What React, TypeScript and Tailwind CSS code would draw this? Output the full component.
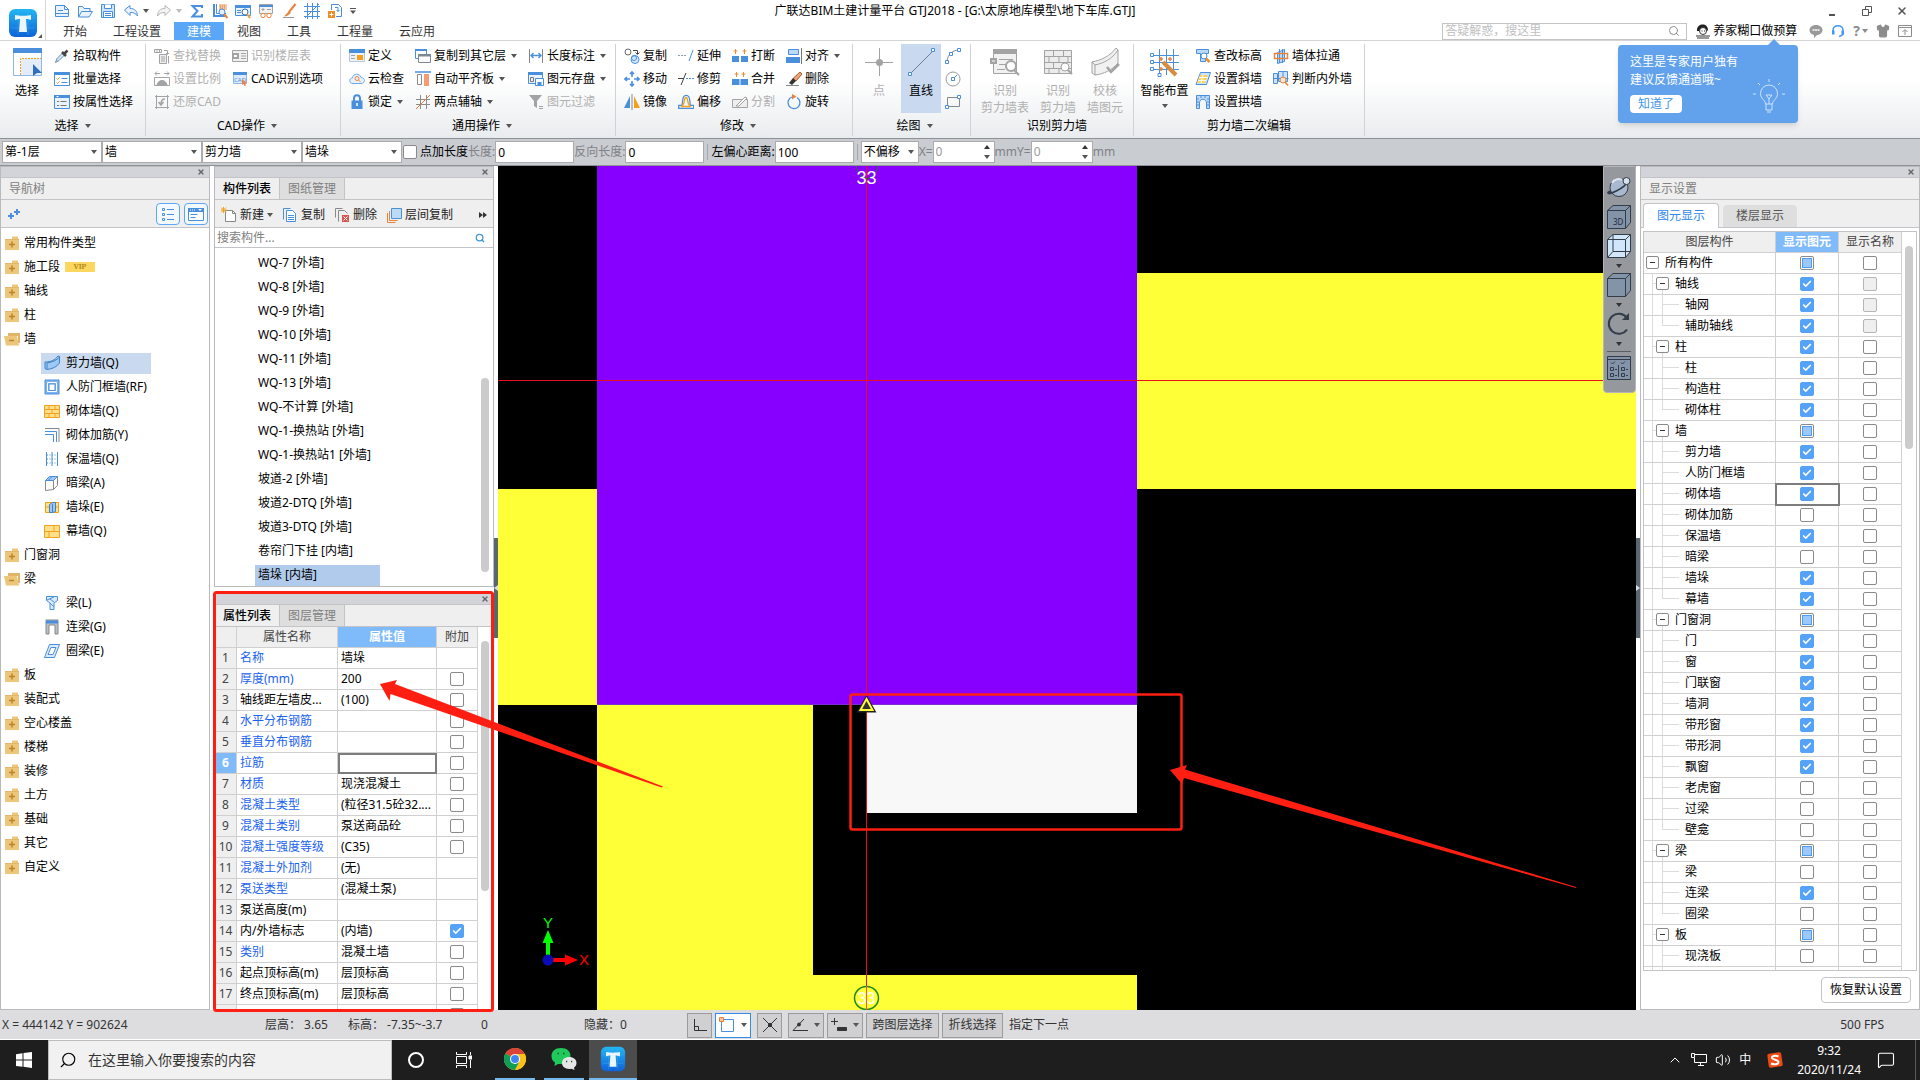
import React from 'react';
import { ChevronUp, Search, Volume2, MessageSquare, Check, X, Shirt } from 'lucide-react';

const B = '#4a8fdc';
const G = '#a3a3a3';
const O = '#f5a01d';

// 16x16 drawings
const icons: Record<string, React.ReactNode> = {
   newFile: <g stroke={B}><path d="M1.5 2.5h9l4 4v7h-13zM10.5 2.5v4h4" fill="#eaf3fd" /><path d="M1.5 10.5h13M4 7.5h5" /></g>,
   open: <g stroke={B} fill="#eaf3fd"><path d="M1.5 14V3.5h4l1.5 2h6v3" /><path d="M1.5 14l3-5.5h11l-3.5 5.5z" /></g>,
   save: <g stroke={B}><path d="M1.5 1.5h13v13h-13z" fill="#cfe3fa" /><path d="M4.5 1.5v4h7v-4M3.5 8.5h9v6h-9z" fill="#fff" /><path d="M5 10.5h6M5 12.5h6" /></g>,
   undo: <path d="M1.5 7L7 2.500v3c5 0 7 2.500 7.500 7.500-2-3-4-3.500-7.500-3.500v3z" fill="#eaf3fd" stroke={B} />,
   redo: <path d="M14.5 7L9 2.500v3c-5 0-7 2.500-7.500 7.500 2-3 4-3.500 7.500-3.500v3z" fill="#f4f4f4" stroke="#b5b5b5" />,
   sigma: <path d="M13 5V3H3.5l5 5-5 5.5H13v-2.500" stroke={B} strokeWidth="2" />,
   calc: <g><path d="M2 1v12h12" stroke={B} strokeWidth="2" /><path d="M4.5 1v9.5H14" stroke={B} /><path d="M7 1h8v6H7z" fill="#f3c9a8" /><path d="M8 3h6M8 5h6" stroke="#d9753b" strokeDasharray="1 1" /><circle cx="10" cy="9" r="3" fill="#e4eefb" stroke={B} /><path d="M12 11l3.5 4" stroke="#e8833a" strokeWidth="2" /></g>,
   lookup: <g><path d="M.5 2.5h15v10H.5z" fill="#eaf3fd" stroke={B} /><path d="M0 2h16v3H0z" fill={B} /><path d="M2 7.5h4M2 9.5h4" stroke={B} /><circle cx="10" cy="9" r="3" fill="#fff" stroke="#2f6fb8" /><path d="M12 11l3 4" stroke="#e8a13a" strokeWidth="2" /></g>,
   glasses: <g><path d="M1.5 1.5h13v9h-13z" fill="#f2f2f2" stroke={G} /><path d="M1 3h14" stroke={B} strokeWidth="2" /><path d="M3.5 6.5h3M9 6.5h4M5 5v3" stroke={G} /><circle cx="5" cy="12.500" r="2.200" fill="#fff" stroke="#e8833a" /><circle cx="11" cy="12.500" r="2.200" fill="#fff" stroke="#e8833a" /></g>,
   brush: <g><path d="M14.5 1L8 9" stroke="#e8833a" strokeWidth="2" /><path d="M8 8l2 2-4 3-3 .5z" fill="#e8833a" /><path d="M2 14.5h11" stroke="#999" /></g>,
   grid: <g stroke={B}><path d="M0 3.5h16M0 8.5h16M0 13.5h16M3.5 0v16M8.5 0v16M13.5 0v16" /><path d="M1 15L15 1" /></g>,
   addFile: <g><path d="M4.5 7V1.5h7l3 3v9H9" fill="#fff" stroke={B} /><path d="M8 4.5h3v4M9.500 7l1.500 1.500L12.500 7" stroke={B} /><path d="M1 8h7v7H1z" fill="#f08a24" /><path d="M4.5 9.5v4M2.5 11.5h4" stroke="#fff" /></g>,
   picker: <g><path d="M1.5 14.5l1.500-4 6-6 2 2-6 6z" fill="#d5e3f3" stroke="#6b8bb5" /><path d="M8 4l4 4M9.5 6.5L13.500 2.500" stroke="#444" strokeWidth="2.500" /></g>,
   batch: <g><path d="M.5 1.5h15v13H.5z" fill="#fff" stroke={B} /><path d="M0 1h16v3H0z" fill={B} /><path d="M2.5 7.500l1 1 2-2M2.5 11.500l1 1 2-2" stroke={O} /><path d="M7.5 7.5h6M7.5 11.5h6" stroke={B} /></g>,
   byProp: <g><path d="M.5 1.5h15v13H.5z" fill="#eaf3fd" stroke={B} /><path d="M0 1h16v3H0z" fill={B} /><path d="M2 2h3L3.5 3.500z" fill="#fff" /><path d="M3 7.5h2M3 11.5h2M6.5 7.5h6M6.5 11.5h6" stroke="#777" /></g>,
   replace: <g stroke={G}><path d="M.5 1.5h7v3h-7zM3 1.5v3M5.5 1.5v3M10 2.5h3.5V6M12 5l1.5 1.5L15 5" /><path d="M5.5 6.5h7v9h-7z" fill="#eee" /><path d="M7 9h4M7 11h4M7 13h4M14.5 8v7.5" /></g>,
   ratio: <g stroke={G}><path d="M1 2.5h5M10 2.5h5M3 .5l-2 2 2 2M13 .5l2 2-2 2M.5 6.5h15v8H.5z" /><path d="M3 14c1-6 9-6 10 0z" fill={G} /></g>,
   restore: <g stroke={G}><path d="M1 2.5h14M1 13.5h14M2.5 1v14M13.5 1v14" /><path d="M11 5c-3 0-4 2-4 5M4.5 8L7 11l2.500-3" strokeWidth="1.500" /></g>,
   floorTable: <g stroke={G}><path d="M.5 2.5h15v11H.5z" fill="#f1f1f1" /><path d="M0 5h7v6H0z" fill={G} stroke="none" /><path d="M2 7h3v2H2z" fill="#fff" stroke="none" /><path d="M9 5.5h5M9 8h5M9 10.5h5" /></g>,
   cadOpt: <g><path d="M1.5 1.5h13v11h-13z" fill="#dcebfb" stroke="#8ab8ea" /><path d="M1 1h14v3H1z" fill={B} /><text x="2" y="10.500" fontSize="6" fill={B} fontFamily="Noto Sans">CAD</text><path d="M10 8l5 4-2 .5 1 2-1.500.5-1-2-1.500 1z" fill="#f0814c" /></g>,
   define: <g><path d="M.5 2.5h15v11H.5z" fill="#eaf3fd" stroke="#b9c8d8" /><path d="M0 1h16v4H0z" fill={B} /><path d="M2 7.5h4M2 10.5h4" stroke={G} /><path d="M8 7h6v5H8z" fill={O} /></g>,
   cloud: <g><path d="M4 12.5C-.5 12.5 0 7 3.500 7 4 2 11 2 12 6.500c4.500 0 4.500 6 0 6z" fill="#eaf3fd" stroke="#6aa8ea" /><circle cx="8" cy="7.500" r="2" stroke="#e8833a" /><path d="M9.500 9l2 2" stroke="#e8833a" /></g>,
   lock: <g><path d="M5 7V4.500C5 0 11 0 11 4.500V7" stroke={B} strokeWidth="2" /><path d="M2.500 6.500h11V15h-11z" fill={B} /><path d="M8 9v3" stroke="#fff" strokeWidth="1.500" /></g>,
   copyFloor: <g><path d="M.5 1.5h11v9H.5z" fill="#fff" stroke={B} /><path d="M0 1h12v2H0z" fill={B} /><path d="M3.5 6.5h12v8h-12z" fill="#fff" stroke="#7c8a96" /><path d="M3 6h13v2.500H3z" fill="#7c8a96" /></g>,
   alignSlab: <g><path d="M0 1h16" stroke={B} strokeWidth="1.500" /><path d="M2.5 3.5h4v10h-4z" fill="#fff" stroke="#8b8b8b" /><path d="M9 3h5v12H9z" fill="#f79b73" /></g>,
   twoPoint: <g stroke="#8b8b8b"><path d="M5.5 1v14M11.5 1v14M1 5.5h14M1 10.5h14" /><path d="M1 15L15 1" stroke="#e07b3a" /></g>,
   dimension: <g><path d="M1.5 1v14M14.5 1v14" stroke="#888" /><path d="M3 7.5h10M5.5 5L3 7.500 5.500 10M10.500 5L13 7.500 10.500 10" stroke={B} strokeWidth="1.400" /></g>,
   storeEl: <g><path d="M.5 1.5h14v11H.5z" fill="#eaf3fd" stroke={B} /><path d="M0 1h15v3H0z" fill={B} /><path d="M2.5 6.5h3v4h-3z" stroke="#777" /><path d="M7.5 7.5h8v7h-8z" fill="#fff" stroke={B} /><path d="M9.5 11h4v3.500h-4z" fill={B} /></g>,
   filter: <g><path d="M1 1h13l-5 6v7l-3-2V7z" fill={G} /><path d="M11 12.5h4M11 14.5h4" stroke={G} /></g>,
   copy: <g><circle cx="4" cy="4" r="3" stroke="#666" fill="#fff" /><circle cx="11" cy="11.500" r="4" stroke={B} fill="#d5e7fb" /><circle cx="10" cy="10" r="2.500" stroke={B} /><path d="M9 2.5h4.500V6M11.500 4.500l2 2 2-2" stroke="#444" /></g>,
   move: <path d="M8 1v5M8 10v5M1 8h5M10 8h5M6 3l2-2 2 2M6 13l2 2 2-2M3 6L1 8l2 2M13 6l2 2-2 2" stroke={B} strokeWidth="1.600" />,
   mirror: <g><path d="M6 2v12H0z" fill={B} /><path d="M10 2v12h6z" fill={O} /><path d="M8 0v16" stroke="#888" /></g>,
   extend: <g><path d="M0 7.5h9" stroke="#8b9bb0" strokeDasharray="2 1" /><path d="M11 13L15 2" stroke={B} /></g>,
   trim: <g><path d="M0 7.5h6M3 14L8 2" stroke="#444" /><path d="M8 7.5h8" stroke={B} strokeDasharray="2 1" /></g>,
   offset: <g strokeWidth="1.300"><path d="M.700 14.300v-3h3c2-2-1-10 4.500-10s2.500 8 4.500 10h3v3z" stroke={B} /><path d="M3 12.500c5-2 2-9 5-9s0 7 5 9z" stroke={O} /></g>,
   breakIt: <g><path d="M0 8h7v6H0zM9 8h7v6H9z" fill={B} /><path d="M3.5 1v5M1.5 3h4M12.5 1v5M10.5 3h4" stroke="#e8912f" /></g>,
   merge: <g><path d="M0 8h7.500v6H0zM8.500 8H16v6H8.500z" fill={B} /><path d="M4.5 1v5M2.5 3h4M11.5 1v5M9.5 3h4" stroke="#e8912f" /></g>,
   split: <g stroke={G}><path d="M.5 5.5h15v8H.5z" fill="#eee" /><path d="M4 12l9-9 2 1-8 8z" fill="#fff" /></g>,
   align: <g><path d="M2.5 1.5h10v5h-10z" fill="#bcd9f8" stroke={B} /><path d="M0 9h14v6H0z" fill={B} /><path d="M15.5 0v16" stroke="#777" /></g>,
   erase: <g><path d="M14 1l2 2-6 7-3-2.500z" fill="#f0a374" stroke="#a35b30" /><path d="M7 7l3 3-4 4-3-2z" fill="#333" /><path d="M0 14.5h13" stroke="#888" /></g>,
   rotate: <g><path d="M6 3a6 6 0 1 0 5 .5" stroke={B} strokeWidth="1.300" /><path d="M6 0l4.500 2.500L6 5.500z" fill="#e8833a" /></g>,
   arc: <g><path d="M2 13C3 6 8 2 14 2" stroke="#888" /><path d="M.5 12.5h3v3h-3zM4.5 4.5h3v3h-3zM12.5 .5h3v3h-3z" fill="#fff" stroke={B} /></g>,
   circle: <g><circle cx="8" cy="8" r="7" stroke="#999" /><path d="M8 8l4-4" stroke={B} /><path d="M6.5 6.5h3v3h-3z" fill="#fff" stroke={B} /></g>,
   rect: <g><path d="M2.5 3.5h12v9h-12z" stroke="#888" /><path d="M.5 11.5h3v3h-3zM12.5 1.5h3v3h-3z" fill="#fff" stroke={B} /></g>,
   height: <g><path d="M1.5 1.5h12v4h-3v8h-5v-8h-4z" fill="#bcd9f8" stroke={B} /><circle cx="9" cy="8" r="3" fill="#fff" stroke={B} /><path d="M11 10.500l3.500 3.500" stroke="#e8912f" strokeWidth="2.500" /></g>,
   slope: <g><path d="M5.5 1.5h10l-4 12H1z" fill="#cfe3fa" stroke={B} /><path d="M5 4h8l-3 8H2z" fill="#fbd35a" /><path d="M4 6.500h9M3 9.500h8M8 4l-2 8" stroke="#fff" /></g>,
   arch: <g><path d="M1.5 1.5h13v13h-3V9c0-5-7-5-7 0v5.500h-3z" fill="#bcd9f8" stroke={B} /><path d="M1 5h3M12 5h3M1 8h3M12 8h3M1 11h3M12 11h3M6 1v3M10 1v3" stroke={B} /></g>,
   through: <g><path d="M4.5 4.5l7-3v12l-7 2z" fill="#bcd9f8" stroke={B} /><path d="M6.5 1v14M9.5 1v14" stroke={B} /><path d="M1.5 5.5h13v5h-13z" stroke="#e8833a" strokeWidth="1.500" /></g>,
   judge: <g><path d="M.5 2.5h4v10h-4zM5.5 .5h9v10h-9z" fill="#cfe3fa" stroke={B} /><path d="M.5 7.5h15M10 .5v10" stroke={B} /><circle cx="10" cy="9" r="3" fill="#fde6d8" stroke="#e8833a" /><path d="M12 11l3 3.500" stroke="#e8833a" strokeWidth="1.500" /></g>,
   // component list toolbar
   create: <g><path d="M4.5 3.5h7l3 3v8h-10z" fill="#fff" stroke="#888" /><path d="M11.5 3.5v3h3" stroke="#888" /><path d="M2.5 0v6M0 3h6M0 .5l5 5M5 .5l-5 5" stroke={O} /></g>,
   copyDoc: <g><path d="M1.5 12.5v-11h7" stroke={B} /><path d="M4.5 3.5h6l3 3v8h-9z" fill="#fff" stroke={B} /><path d="M6 8.5h6M6 10.5h6M6 12.5h6" stroke={B} /></g>,
   removeDoc: <g><path d="M1.5 10.5v-9h7M4.5 14.5v-11h6l3 3" stroke="#888" /><path d="M8 8h7v7H8z" fill="#d9534f" /><path d="M9.5 9.500l4 4M13.500 9.500l-4 4" stroke="#fff" /></g>,
   layerCopy: <g><path d="M1.5 6v9.500h8M3.5 4v9.500h8" stroke="#e8833a" /><path d="M5.5 1.5h10v10h-10z" fill="#bcd9f8" stroke={B} /></g>,
   // nav tree
   folder: <g><path d="M1 4h14v11H1z" fill="#ecc67a" /><path d="M8 1.500h6V4H8z" fill="#ecc67a" /><path d="M1 4.5h14" stroke="#e3b968" /><path d="M8 6.500v6M5 9.500h6" stroke="#b8862f" strokeWidth="1.500" /></g>,
   folderOpen: <g><path d="M4 2h12v10h-2V5H4z" fill="#e0b565" /><path d="M0 5h13l2 9.500H2z" fill="#ecc67a" /><path d="M5 9.5h5" stroke="#b8862f" strokeWidth="1.500" /></g>,
   shearWall: <path d="M1 7c6 0 10-2 13-6l1.500.5V8c-3 4-7 6-13 6.500L1 13.500zM3 14V8C9 7 13 5 15.500 2" fill="#9fc9f3" stroke="#3d82c9" />,
   doorWall: <g><path d="M1 1h14v14H1z" fill="#7fb3ee" stroke={B} /><path d="M3.5 3.5h9v9h-9z" stroke="#fff" /><path d="M5 5h6v6.500H5z" fill="#fff" stroke={B} /></g>,
   brick: <g><path d="M.5 2.5h15v12H.5z" fill="#fde08b" stroke={O} /><path d="M.5 6.5h15M.5 10.5h15M5 2.5v4M11 2.5v4M8 6.5v4M5 10.5v4M11 10.5v4" stroke={O} /></g>,
   rebar: <g><path d="M1 1.5h14V15" stroke="#888" /><path d="M1 4.5h11.500V15M1 7.5h8.500V15" stroke={B} /></g>,
   insulation: <g stroke={B}><path d="M2.5 1v14M8 1v14M13.5 1v14" /><path d="M3 4h10M3 8h10M3 12h10" strokeDasharray="1 1.500" /></g>,
   hiddenBeam: <g><path d="M1.5 5.5h8v9l-8 1zM9.5 5.5l4-4v9l-4 4" fill="#fff" stroke="#888" /><path d="M1.5 5.5l4-4h8l-4 4zM4 5.500l4-4" fill="#9fc9f3" stroke={B} /></g>,
   pier: <g><path d="M1.5 3.5h13v10h-13z" fill="#fde08b" stroke={O} /><path d="M1.5 8h13" stroke={O} /><path d="M5.5 5.500l3-2h3v9l-3 1h-3zM8.500 5v8" fill="#9fc9f3" stroke="#3d82c9" /></g>,
   curtain: <g><path d="M.5 2.5h15v12H.5z" fill="#fde08b" stroke={O} /><path d="M.5 8.5h15M10 2.5v6M5 8.5v6" stroke={O} /></g>,
   beam: <path d="M2.5 1.5h11v4L10 8v6.500H6V8L2.500 5.500zM6 4l4 3M6 8l4 4M10 2l-7 3" fill="#dcebfb" stroke={B} />,
   linkBeam: <g><path d="M2 1h12v14h-3V6H5v9H2z" fill="#b8c0c8" stroke="#888" /><path d="M2 3h12" stroke={B} strokeWidth="3" /></g>,
   ringBeam: <path d="M5.5 1.5h10l-5 13H.5zM7 4.500h5l-3 7H4z" fill="#dcebfb" fillRule="evenodd" stroke={B} />,
};

const Icon: React.FC<{ name: string; className?: string }> = ({ name, className = 'size-4' }) => (
   <svg viewBox="0 0 16 16" fill="none" className={`shrink-0 ${className}`} aria-hidden="true">{icons[name]}</svg>
);

const Caret: React.FC<{ className?: string }> = ({ className = 'text-[#555]' }) => (
   <svg viewBox="0 0 6 4" className={`h-1 w-1.5 shrink-0 ${className}`} aria-hidden="true"><path d="M0 0h6L3 4z" fill="currentColor" /></svg>
);

/* ---------- header ---------- */

const TLogo: React.FC<{ className: string }> = ({ className }) => (
   <svg viewBox="0 0 30 30" className={className} aria-hidden="true">
      <defs>
         <linearGradient id="tlogo" x1="0" y1="0" x2="0" y2="1">
            <stop offset="0" stopColor="#22b6f4" />
            <stop offset="1" stopColor="#0f62d8" />
         </linearGradient>
      </defs>
      <rect x="1" y="1" width="28" height="28" rx="6" fill="url(#tlogo)" />
      <path d="M3 10h24M3 20h24M10 3v24M20 3v24" stroke="#5cc3f7" strokeWidth=".5" opacity=".6" />
      <path d="M7 7c3 1 13 1 16 0v5c-2-.8-3-1-5-1l1 13h-8l1-13c-2 0-3 .2-5 1z" fill="#eaf6ff" />
   </svg>
);

const tabs = ['开始', '工程设置', '建模', '视图', '工具', '工程量', '云应用'];

const Header = () => (
   <header className="relative flex shrink-0 border-b border-[#d4d4d4] bg-white">
      <button aria-label="主菜单" className="flex w-[46px] items-end justify-center border-r border-[#d4d4d4] pb-0.5 pl-1">
         <TLogo className="size-[30px]" />
         <svg viewBox="0 0 4 4" className="size-1"><path d="M4 0v4H0z" fill="#555" /></svg>
      </button>
      <div className="min-w-0 flex-1">
         <div className="grid h-[22px] grid-cols-[314px_1fr_370px] items-center">
            <div className="flex items-center gap-[7px] pl-2">
               <Icon name="newFile" />
               <Icon name="open" />
               <Icon name="save" />
               <span className="flex items-center gap-1"><Icon name="undo" /><Caret /></span>
               <span className="flex items-center gap-1"><Icon name="redo" /><Caret className="text-[#bbb]" /></span>
               <Icon name="sigma" />
               <Icon name="calc" />
               <Icon name="lookup" />
               <Icon name="glasses" />
               <Icon name="brush" />
               <Icon name="grid" />
               <Icon name="addFile" />
               <svg viewBox="0 0 6 6" className="size-1.5 shrink-0"><path d="M0 0h6v1H0zM0 2.500h6L3 6z" fill="#555" /></svg>
            </div>
            <h1 className="truncate text-center">广联达BIM土建计量平台 GTJ2018 - [G:\太原地库模型\地下车库.GTJ]</h1>
            <div className="flex items-center justify-end gap-6 pr-3 text-[#555]">
               <button aria-label="最小化" className="flex h-2.5 w-3 items-end justify-center"><span className="h-0.5 w-1.5 bg-[#555]" /></button>
               <button aria-label="还原">
                  <svg viewBox="0 0 10 10" fill="none" stroke="currentColor" className="size-2.5"><path d="M.5 3.5h6v6h-6zM3.5 3V.5h6v6H7" /></svg>
               </button>
               <button aria-label="关闭"><X className="size-3" strokeWidth={3} /></button>
            </div>
         </div>
         <div className="flex h-[18px] items-center">
            <nav className="flex self-stretch pl-1">
               {tabs.map((tab) => (
                  <button key={tab} className={`px-[13px] pt-0.5 ${tab === '建模' ? 'bg-[#5aa7f8] text-white' : 'text-[#333]'}`}>{tab}</button>
               ))}
            </nav>
            <div className="ml-auto flex items-center pr-2 text-[#8c8c8c]">
               <label className="mr-2 flex h-[17px] w-[245px] items-center border border-[#c4c4c4] px-0.5">
                  <input aria-label="搜索帮助" placeholder="答疑解惑，搜这里" className="min-w-0 flex-1 outline-none placeholder:text-[#c0c0c0]" />
                  <Search className="mr-1 size-3" />
               </label>
               <svg viewBox="0 0 16 16" className="mr-0.5 size-4">
                  <path d="M2 8C1 0 13-1 13 7l-1 1-4-2-4 2z" fill="#222" />
                  <circle cx="8" cy="8" r="3.500" fill="#fff" stroke="#333" />
                  <path d="M1 13h14M2 15h12" stroke="#333" />
                  <path d="M6.500 8h1M9 8h1" stroke="#222" />
               </svg>
               <span className="mr-3 text-black">养家糊口做预算</span>
               <svg viewBox="0 0 14 14" className="mr-2 size-3.5"><path d="M7 1c4 0 6.500 2.500 6.500 5S11 11 8 11l-3 3v-3C2 10.500 .5 8.500 .5 6S3 1 7 1z" fill="#999" /><path d="M3.5 6h2M6 6h2M8.500 6h2" stroke="#fff" strokeWidth="1.500" /></svg>
               <svg viewBox="0 0 14 14" className="mr-2 size-3.5" fill="none"><path d="M2 9V6.500C2 0 12 0 12 6.500V9c0 2-1.500 3-4 3.500" stroke="#3d95f5" strokeWidth="1.500" /><path d="M1 6.500h2.500v4H1zM10.500 6.500H13v4h-2.500z" fill="#3d95f5" /></svg>
               <span className="mr-0.5 text-sm font-bold">?</span>
               <Caret className="mr-2 text-[#8c8c8c]" />
               <Shirt className="mr-2 size-3.5" fill="currentColor" />
               <svg viewBox="0 0 14 14" className="size-3.5" fill="none" stroke="currentColor"><path d="M.5 1.5h13v11H.5zM.5 3.5h13M7 11V6M4.500 8L7 5.500 9.500 8" /></svg>
            </div>
         </div>
      </div>
      <div className="absolute top-[45px] right-[122px] z-10 flex w-[180px] justify-between rounded bg-[#62a2ec] px-3 pt-2 pb-2.5 text-white shadow-md">
         <svg viewBox="0 0 12 6" className="absolute -top-1.5 right-[18px] h-1.5 w-3"><path d="M6 0l6 6H0z" fill="#62a2ec" /></svg>
         <div>
            <p className="leading-[18px] whitespace-nowrap">这里是专家用户独有</p>
            <p className="leading-[18px] whitespace-nowrap">建议反馈通道哦~</p>
            <button className="mt-1.5 h-[18px] rounded-sm bg-white px-2 leading-[18px] text-[#3f95ea]">知道了</button>
         </div>
         <svg viewBox="0 0 34 34" className="-ml-3 size-[34px] shrink-0 self-end" fill="none" stroke="#cfe3fb">
            <path d="M13.500 25c0-4-5-5-5-10.500a8.500 8.500 0 0 1 17 0c0 5.500-5 6.500-5 10.500zM14 25v6h6v-6M15 33h4M14 16l3 4 3-4zM17 20v5M17 0v3M1 15h3M30 15h3M6 4l2 2M28 4l-2 2" />
         </svg>
      </div>
   </header>
);

/* ---------- ribbon ---------- */

interface ToolProps {
   icon: string;
   label: string;
   off?: boolean;
   menu?: boolean;
}

const Tool: React.FC<ToolProps> = ({ icon, label, off, menu }) => (
   <button disabled={off} className={`flex h-[23px] items-center gap-[3px] whitespace-nowrap ${off ? 'text-[#b0b0b0]' : 'text-black'}`}>
      <Icon name={icon} />
      {label}
      {menu && <span className="pl-0.5"><Caret /></span>}
   </button>
);

const ToolColumn: React.FC<{ tools: ToolProps[] }> = ({ tools }) => (
   <div className="flex flex-col">
      {tools.map((tool) => <Tool key={tool.label} {...tool} />)}
   </div>
);

const Group: React.FC<{ label: string; menu?: boolean; className: string; children: React.ReactNode }> = ({ label, menu, className, children }) => (
   <section className={`mt-[3px] mb-0.5 flex shrink-0 flex-col border-r border-[#d0d3d6] ${className}`}>
      <div className="flex h-[69px] gap-[11px]">{children}</div>
      <div className="flex flex-1 items-center justify-center gap-1.5 pt-0.5">
         {label}
         {menu && <Caret />}
      </div>
   </section>
);

const BigTool: React.FC<{ lines: string[]; off?: boolean; active?: boolean; menu?: boolean; className: string; children: React.ReactNode }> = ({ lines, off, active, menu, className, children }) => (
   <button disabled={off} className={`flex shrink-0 flex-col items-center pt-[3px] whitespace-nowrap ${off ? 'text-[#b0b0b0]' : 'text-black'} ${active ? 'bg-[#c9daf0]' : ''} ${className}`}>
      <svg viewBox="0 0 30 30" fill="none" className="mb-[5px] size-[30px] shrink-0">{children}</svg>
      {lines.map((line) => <span key={line} className="leading-[17px]">{line}</span>)}
      {menu && <span className="flex h-[17px] items-center"><Caret /></span>}
   </button>
);

const Ribbon = () => (
   <div className="flex h-[97px] shrink-0 bg-linear-to-b from-white from-40% to-[#e9ecee]">
      <Group label="选择" menu className="w-[146px]">
         <div className="flex">
            <BigTool lines={['选择']} className="w-[54px]">
               <path d="M1.5 1.5h28v27h-28z" fill="#fff" stroke="#8ab8ea" />
               <path d="M1 1h29v5H1z" fill={B} />
               <path d="M8.5 28V11.5H29" stroke={O} strokeDasharray="2 1" />
               <path d="M9 12h20v16H9z" fill="#e3ecf8" />
               <path d="M21 17l9 9h-5l-4 3z" fill="#2f6fc0" />
            </BigTool>
            <ToolColumn tools={[{ icon: 'picker', label: '拾取构件' }, { icon: 'batch', label: '批量选择' }, { icon: 'byProp', label: '按属性选择' }]} />
         </div>
      </Group>
      <Group label="CAD操作" menu className="w-[195px] pl-2">
         <ToolColumn tools={[{ icon: 'replace', label: '查找替换', off: true }, { icon: 'ratio', label: '设置比例', off: true }, { icon: 'restore', label: '还原CAD', off: true }]} />
         <ToolColumn tools={[{ icon: 'floorTable', label: '识别楼层表', off: true }, { icon: 'cadOpt', label: 'CAD识别选项' }]} />
      </Group>
      <Group label="通用操作" menu className="w-[275px] pl-2">
         <ToolColumn tools={[{ icon: 'define', label: '定义' }, { icon: 'cloud', label: '云检查' }, { icon: 'lock', label: '锁定', menu: true }]} />
         <ToolColumn tools={[{ icon: 'copyFloor', label: '复制到其它层', menu: true }, { icon: 'alignSlab', label: '自动平齐板', menu: true }, { icon: 'twoPoint', label: '两点辅轴', menu: true }]} />
         <ToolColumn tools={[{ icon: 'dimension', label: '长度标注', menu: true }, { icon: 'storeEl', label: '图元存盘', menu: true }, { icon: 'filter', label: '图元过滤', off: true }]} />
      </Group>
      <Group label="修改" menu className="w-[237px] pl-2">
         <ToolColumn tools={[{ icon: 'copy', label: '复制' }, { icon: 'move', label: '移动' }, { icon: 'mirror', label: '镜像' }]} />
         <ToolColumn tools={[{ icon: 'extend', label: '延伸' }, { icon: 'trim', label: '修剪' }, { icon: 'offset', label: '偏移' }]} />
         <ToolColumn tools={[{ icon: 'breakIt', label: '打断' }, { icon: 'merge', label: '合并' }, { icon: 'split', label: '分割', off: true }]} />
         <ToolColumn tools={[{ icon: 'align', label: '对齐', menu: true }, { icon: 'erase', label: '删除' }, { icon: 'rotate', label: '旋转' }]} />
      </Group>
      <Group label="绘图" menu className="w-[118px] pl-1.5">
         <div className="flex gap-0.5">
            <BigTool lines={['点']} off className="w-10">
               <path d="M15.5 1v28M1 15.5h28" stroke={G} />
               <circle cx="15.500" cy="15.500" r="3.500" fill={G} />
            </BigTool>
            <BigTool lines={['直线']} active className="w-10">
               <path d="M4 27L27 4" stroke="#6b7f98" />
               <path d="M2.5 25.5h3v3h-3zM25.5 1.5h3v3h-3z" fill="#fff" stroke={B} />
            </BigTool>
            <div className="flex flex-col pl-0.5">
               <button aria-label="三点弧" className="flex h-[23px] items-center"><Icon name="arc" /></button>
               <button aria-label="圆" className="flex h-[23px] items-center"><Icon name="circle" /></button>
               <button aria-label="矩形" className="flex h-[23px] items-center"><Icon name="rect" /></button>
            </div>
         </div>
      </Group>
      <Group label="识别剪力墙" className="w-[163px] pl-2.5">
         <BigTool lines={['识别', '剪力墙表']} off className="w-12">
            <path d="M3.5 5.5h23v21h-23z" fill="#f1f1f1" stroke={G} />
            <path d="M3 2h24v5H3zM0 11h7v6H0z" fill={G} />
            <path d="M2 14h3" stroke="#fff" />
            <path d="M9 12.5h14M9 17.5h7M7 22.5h8" stroke={G} />
            <circle cx="21" cy="19" r="5" fill="#fff" stroke={G} strokeWidth="2" />
            <path d="M24 23l5 5" stroke={G} strokeWidth="2" />
         </BigTool>
         <BigTool lines={['识别', '剪力墙']} off className="w-9">
            <path d="M1.5 3.5h27v23h-27z" fill="#ececec" stroke={G} />
            <path d="M1 9.5h28M1 15.5h28M1 21.5h28M10.5 3v6M20.5 3v6M6 9v6M16 9v6M25 9v6M10.5 15v6M6 21v6M16 21v6" stroke={G} />
            <circle cx="22" cy="20" r="4" fill="#fff" stroke={G} />
            <path d="M25 23l4 4" stroke={G} strokeWidth="2" />
         </BigTool>
         <BigTool lines={['校核', '墙图元']} off className="w-9">
            <path d="M2 15C12 13 20 9 26 1l2 2v13c-6 7-14 11-23 12l-3-2zM5 28V18c9-2 17-6 23-15M2 15l3 3" fill="#f1f1f1" stroke={G} />
            <path d="M17 20l4 5 8-8" stroke={G} strokeWidth="2.500" />
         </BigTool>
      </Group>
      <Group label="剪力墙二次编辑" className="w-[231px]">
         <div className="flex">
            <BigTool lines={['智能布置']} menu className="w-[61px]">
               <path d="M3 8.5h26M3 15.5h26M3 22.5h26M9.5 2v26M16.5 2v26M23.5 2v26" stroke={B} />
               <path d="M.5 6.5h3v3h-3zM.5 13.5h3v3h-3zM.5 20.5h3v3h-3zM8 26.5h3v3H8z" fill="#fff" stroke={B} />
               <path d="M13 15l13 13" stroke="#d98a3d" strokeWidth="4" />
               <path d="M11 10v4M9 12h4M18 12h4M20 10v4M9 22h4M11 20v4" stroke="#e8833a" strokeWidth="1.500" />
            </BigTool>
            <ToolColumn tools={[{ icon: 'height', label: '查改标高' }, { icon: 'slope', label: '设置斜墙' }, { icon: 'arch', label: '设置拱墙' }]} />
         </div>
         <ToolColumn tools={[{ icon: 'through', label: '墙体拉通' }, { icon: 'judge', label: '判断内外墙' }]} />
      </Group>
   </div>
);

/* ---------- option bar ---------- */

const Picker: React.FC<{ label: string; value: string; className: string }> = ({ label, value, className }) => (
   <div className={`grid h-[22px] items-center border border-[#ababab] bg-white ${className}`}>
      <select aria-label={label} className="col-start-1 row-start-1 h-full w-full appearance-none px-0.5 outline-none">
         <option>{value}</option>
      </select>
      <span className="pointer-events-none col-start-1 row-start-1 mr-1 justify-self-end"><Caret /></span>
   </div>
);

const Field: React.FC<{ label: string; value: string; muted?: boolean }> = ({ label, value, muted }) => (
   <label className={`flex items-center whitespace-nowrap ${muted ? 'text-[#7f8286]' : ''}`}>
      {label}
      <input defaultValue={value} className="h-[22px] w-[79px] border border-[#ababab] bg-white px-0.5 text-black outline-none" />
   </label>
);

const Spin: React.FC<{ label: string }> = ({ label }) => (
   <label className="flex items-center text-[#7f8286]">
      {label}
      <span className="flex h-[22px] w-[62px] items-center border border-[#ababab] bg-white pr-1">
         <input defaultValue="0" disabled className="min-w-0 flex-1 px-0.5 text-[#9a9a9a]" />
         <span className="flex flex-col gap-1.5 text-[#333]">
            <Caret className="rotate-180" />
            <Caret />
         </span>
      </span>
   </label>
);

const OptionBar = () => (
   <div className="flex h-7 shrink-0 items-center border-y border-[#8e9195] bg-[#c9ccd1] pl-0.5">
      <Picker label="楼层" value="第-1层" className="w-[100px]" />
      <Picker label="构件类别" value="墙" className="w-[100px]" />
      <Picker label="构件类型" value="剪力墙" className="w-[100px]" />
      <Picker label="构件" value="墙垛" className="w-[100px]" />
      <label className="ml-px flex items-center gap-[3px]">
         <Box label="" />
         点加长度
      </label>
      <Field label="长度:" value="0" muted />
      <Field label="反向长度:" value="0" muted />
      <span className="mx-[3px] h-4 border-l border-[#a5a8ac]" />
      <Field label="左偏心距离:" value="100" />
      <span className="mx-[3px] h-4 border-l border-[#a5a8ac]" />
      <Picker label="偏移方式" value="不偏移" className="w-[58px]" />
      <Spin label="X=" />
      <Spin label="mmY=" />
      <span className="text-[#7f8286]">mm</span>
   </div>
);

/* ---------- shared panel parts ---------- */

type State = 'on' | 'off' | 'mixed' | 'disabled';

const Box: React.FC<{ label: string; state?: State }> = ({ label, state = 'off' }) => (
   <span className="inline-grid size-3.5 place-items-center">
      <input
         type="checkbox"
         aria-label={label || undefined}
         defaultChecked={state === 'on'}
         disabled={state === 'disabled'}
         ref={(el) => { if (el) el.indeterminate = state === 'mixed'; }}
         className="peer col-start-1 row-start-1 size-3.5 appearance-none rounded-xs border border-[#8a8a8a] bg-white checked:border-[#55a2f9] checked:bg-[#55a2f9] disabled:border-[#b5b5b5] disabled:bg-[#efefef]"
      />
      {state === 'mixed' && <span className="pointer-events-none col-start-1 row-start-1 size-2.5 border border-[#4a9cf5] bg-[#9cc8fb]" />}
      <Check className="pointer-events-none invisible col-start-1 row-start-1 size-2.5 text-white peer-checked:visible" strokeWidth={4} />
   </span>
);

const Strip: React.FC<{ label: string }> = ({ label }) => (
   <div className="flex h-[11px] shrink-0 items-center justify-end border-b border-[#c3c4c8] bg-[#d3d4da] pr-1">
      <button aria-label={label}><X className="size-2 text-[#666]" strokeWidth={4} /></button>
   </div>
);

const PanelTabs: React.FC<{ items: string[] }> = ({ items }) => (
   <div className="flex h-[22px] shrink-0 border-b border-[#c3c4c8] bg-[#efefef]">
      {items.map((item, index) => (
         <button key={item} className={`border-r border-[#c3c4c8] px-2 ${index === 0 ? 'font-medium text-black' : 'bg-[#dedede] text-[#808080]'}`}>{item}</button>
      ))}
   </div>
);

/* ---------- navigation tree ---------- */

interface NavNode {
   label: string;
   vip?: boolean;
   children?: { label: string; icon: string }[];
}

const navTree: NavNode[] = [
   { label: '常用构件类型' },
   { label: '施工段', vip: true },
   { label: '轴线' },
   { label: '柱' },
   {
      label: '墙',
      children: [
         { label: '剪力墙(Q)', icon: 'shearWall' },
         { label: '人防门框墙(RF)', icon: 'doorWall' },
         { label: '砌体墙(Q)', icon: 'brick' },
         { label: '砌体加筋(Y)', icon: 'rebar' },
         { label: '保温墙(Q)', icon: 'insulation' },
         { label: '暗梁(A)', icon: 'hiddenBeam' },
         { label: '墙垛(E)', icon: 'pier' },
         { label: '幕墙(Q)', icon: 'curtain' },
      ],
   },
   { label: '门窗洞' },
   {
      label: '梁',
      children: [
         { label: '梁(L)', icon: 'beam' },
         { label: '连梁(G)', icon: 'linkBeam' },
         { label: '圈梁(E)', icon: 'ringBeam' },
      ],
   },
   { label: '板' },
   { label: '装配式' },
   { label: '空心楼盖' },
   { label: '楼梯' },
   { label: '装修' },
   { label: '土方' },
   { label: '基础' },
   { label: '其它' },
   { label: '自定义' },
];

const NavPanel = () => (
   <aside className="flex w-[210px] shrink-0 flex-col overflow-hidden border border-[#b9babd] bg-white">
      <Strip label="关闭导航树" />
      <h2 className="flex h-[22px] shrink-0 items-center border-b border-[#c3c4c8] bg-[#efefef] pl-2 text-[#808080]">导航树</h2>
      <div className="flex h-7 shrink-0 items-center gap-1 border-b border-[#c3c4c8] bg-[#efefef] pr-px pl-[7px]">
         <svg viewBox="0 0 12 12" className="mr-auto size-3"><path d="M3 5v6M0 8h6M9 1v6M6 4h6" stroke={B} strokeWidth="2" /></svg>
         <button aria-label="列表视图" className="flex h-[22px] w-6 items-center justify-center rounded-sm border border-[#5aa7f8] bg-[#f4f9ff]">
            <svg viewBox="0 0 14 14" fill="none" stroke={B} className="size-3.5"><path d="M1.5 1.5h2v2h-2zM1.5 6.5h2v2h-2zM1.5 11.5h2v2h-2zM6 2.5h7M6 7.5h7M6 12.5h7" /></svg>
         </button>
         <button aria-label="面板视图" className="flex h-[22px] w-6 items-center justify-center rounded-sm border border-[#5aa7f8] bg-[#f4f9ff]">
            <svg viewBox="0 0 16 14" fill="none" className="h-3.5 w-4"><path d="M.5 1.5h15v12H.5z" fill="#fff" stroke={B} /><path d="M0 1h16v4H0z" fill={B} /><path d="M2 3h1M4 3h1M6 3h1" stroke="#fff" /><path d="M10 2h4l-2 2z" fill="#fff" /><path d="M2.5 7.5h7M2.5 10.5h5" stroke={B} /></svg>
         </button>
      </div>
      <ul className="pt-[3px]">
         {navTree.map((node) => (
            <li key={node.label}>
               <button className="flex h-6 items-center gap-1 pl-[3px]">
                  <Icon name={node.children ? 'folderOpen' : 'folder'} />
                  {node.label}
                  {node.vip && <span className="ml-px h-2.5 w-[30px] bg-[#fcd75f] text-center font-serif text-[8px] leading-[10px] font-bold text-[#b58a1c]">VIP</span>}
               </button>
               {node.children && (
                  <ul>
                     {node.children.map((child) => (
                        <li key={child.label} className="flex h-6 items-center pl-10">
                           <button className={`flex h-[21px] items-center gap-1.5 pr-1 pl-[3px] whitespace-nowrap ${child.icon === 'shearWall' ? 'w-[110px] bg-[#c9daf0]' : ''}`}>
                              <Icon name={child.icon} />
                              {child.label}
                           </button>
                        </li>
                     ))}
                  </ul>
               )}
            </li>
         ))}
      </ul>
   </aside>
);

/* ---------- component list ---------- */

const members = [
   'WQ-7 [外墙]', 'WQ-8 [外墙]', 'WQ-9 [外墙]', 'WQ-10 [外墙]', 'WQ-11 [外墙]', 'WQ-13 [外墙]', 'WQ-不计算 [外墙]',
   'WQ-1-换热站 [外墙]', 'WQ-1-换热站1 [外墙]', '坡道-2 [外墙]', '坡道2-DTQ [外墙]', '坡道3-DTQ [外墙]', '卷帘门下挂 [内墙]', '墙垛 [内墙]',
];

const MemberPanel = () => (
   <section className="flex h-[421px] shrink-0 flex-col overflow-hidden border border-[#b9babd] bg-white">
      <Strip label="关闭构件列表" />
      <PanelTabs items={['构件列表', '图纸管理']} />
      <div className="flex h-7 shrink-0 items-center gap-[9px] border-b border-[#c3c4c8] bg-[#efefef] px-1.5 pt-0.5 text-[#222]">
         <button className="flex items-center gap-[3px]"><Icon name="create" />新建<Caret /></button>
         <button className="flex items-center gap-[3px]"><Icon name="copyDoc" />复制</button>
         <button className="flex items-center gap-[3px]"><Icon name="removeDoc" />删除</button>
         <button className="flex items-center gap-[3px]"><Icon name="layerCopy" />层间复制</button>
         <button aria-label="更多" className="ml-auto">
            <svg viewBox="0 0 8 6" className="h-1.5 w-2"><path d="M0 0l4 3-4 3zM4 0l4 3-4 3z" fill="#333" /></svg>
         </button>
      </div>
      <label className="flex h-5 shrink-0 items-center border-b border-[#c3c4c8] pr-2 pl-0.5">
         <input aria-label="搜索构件" placeholder="搜索构件..." className="min-w-0 flex-1 outline-none placeholder:text-[#808080]" />
         <Search className="size-2.5 text-[#3f95d6]" strokeWidth={3} />
      </label>
      <div className="flex min-h-0 flex-1">
         <ul className="flex-1 pt-[3px] pl-10">
            {members.map((member) => (
               <li key={member} className="flex h-6 items-center">
                  <button className={`h-[21px] px-[3px] text-left ${member === '墙垛 [内墙]' ? 'w-[125px] bg-[#b1cbec]' : ''}`}>{member}</button>
               </li>
            ))}
         </ul>
         <div className="flex w-3 flex-col pr-1 pb-3.5">
            <div className="mt-auto h-[60%] rounded-full bg-[#cbcbcb]" />
         </div>
      </div>
   </section>
);

/* ---------- property list ---------- */

// name, value, blue name, extra column
const props: [string, string, boolean, State | null][] = [
   ['名称', '墙垛', true, null],
   ['厚度(mm)', '200', true, 'off'],
   ['轴线距左墙皮...', '(100)', false, 'off'],
   ['水平分布钢筋', '', true, 'off'],
   ['垂直分布钢筋', '', true, 'off'],
   ['拉筋', '', true, 'off'],
   ['材质', '现浇混凝土', true, 'off'],
   ['混凝土类型', '(粒径31.5砼32....', true, 'off'],
   ['混凝土类别', '泵送商品砼', true, 'off'],
   ['混凝土强度等级', '(C35)', true, 'off'],
   ['混凝土外加剂', '(无)', true, null],
   ['泵送类型', '(混凝土泵)', true, null],
   ['泵送高度(m)', '', false, null],
   ['内/外墙标志', '(内墙)', false, 'on'],
   ['类别', '混凝土墙', true, 'off'],
   ['起点顶标高(m)', '层顶标高', false, 'off'],
   ['终点顶标高(m)', '层顶标高', false, 'off'],
   ['', '', false, 'off'],
];

const cell = 'h-[21px] border-r border-b border-[#d0d0d0] p-0 whitespace-nowrap';

const PropertyPanel = () => (
   <section className="flex min-h-0 flex-1 flex-col overflow-hidden border border-[#b9babd] bg-white">
      <Strip label="关闭属性列表" />
      <PanelTabs items={['属性列表', '图层管理']} />
      <div className="flex min-h-0 flex-1 overflow-hidden">
         <div className="flex-1">
            <table className="w-full table-fixed border-separate border-spacing-0">
               <thead>
                  <tr className="bg-[#efefef] text-[#444]">
                     <th className={`${cell} w-[22px]`} />
                     <th className={`${cell} w-[101px] font-normal`}>属性名称</th>
                     <th className={`${cell} w-[99px] bg-[#7fbbfb] font-bold text-white`}>属性值</th>
                     <th className={`${cell} font-normal`}>附加</th>
                  </tr>
               </thead>
               <tbody>
                  {props.map(([name, value, blue, extra], index) => (
                     <tr key={index}>
                        <td className={`${cell} text-center ${index === 5 ? 'bg-[#7fbbfb] font-bold text-white' : 'bg-[#efefef] text-[#444]'}`}>{name && index + 1}</td>
                        <td className={`${cell} pl-[3px] ${blue ? 'text-[#1a62f0]' : 'text-black'}`}>{name}</td>
                        <td className={`${cell} overflow-hidden pl-[3px] ${index === 5 ? 'outline-2 -outline-offset-2 outline-[#7d7d7d]' : ''}`}>{value}</td>
                        <td className={cell}>
                           <div className="flex justify-center">{extra && <Box label={`附加 ${name}`} state={extra} />}</div>
                        </td>
                     </tr>
                  ))}
               </tbody>
            </table>
         </div>
         <div className="w-[15px] px-[3px] pt-3.5">
            <div className="h-[68%] w-2 rounded-full bg-[#cbcbcb]" />
         </div>
      </div>
   </section>
);

/* ---------- canvas ---------- */

const Drawing = () => (
   <svg viewBox="0 0 1138 844" preserveAspectRatio="xMinYMin slice" className="size-full" fill="none">
      <path d="M0 0h1138v844H0z" fill="#000" />
      <g fill="#ffff37">
         <path d="M639 107h499v216H639zM0 323h99v216H0z" />
         <path d="M99 539h216v270h324v35H99z" />
      </g>
      <path d="M99 0h540v539H99z" fill="#8700ff" />
      <path d="M369 539h270v108H369z" fill="#f8f8f8" />
      <path d="M99 538.5h540" stroke="#7a2fd0" />
      <path d="M0 214.5h1138M368.5 0v844" stroke="#e80f1c" />
      <path d="M358 0c2 8 5 11 11 13M380 0c-2 8-5 11-11 13" stroke="#1f7a1f" />
      <ellipse cx="368.500" cy="832" rx="12" ry="11.500" stroke="#1e8a1e" strokeWidth="1.500" />
      <g fill="#fff" textAnchor="middle" fontFamily="Liberation Sans, sans-serif" fontSize="18">
         <text x="368.500" y="18">33</text>
         <text x="368.500" y="838" fontSize="16">33</text>
      </g>
      <path d="M368.500 820v24" stroke="#ff5a1c" />
      <path d="M368.500 533l6.500 11.500h-13z" fill="#333" stroke="#222" strokeWidth="4" />
      <path d="M368.500 533l6 11h-12z" fill="#333" stroke="#ffff37" strokeWidth="2" />
      <g>
         <path d="M50 792V776" stroke="#0f0" strokeWidth="4" />
         <path d="M50 764l5.500 13h-11z" fill="#0f0" />
         <path d="M52 794h15" stroke="#f00" strokeWidth="4" />
         <path d="M80 794l-13-5.500v11z" fill="#f00" />
         <circle cx="50" cy="794" r="5.500" fill="#0b0bb5" />
         <text x="45" y="762" fill="#0f0" fontFamily="Liberation Sans, sans-serif" fontSize="15">Y</text>
         <text x="81" y="799" fill="#f00" fontFamily="Liberation Sans, sans-serif" fontSize="15">X</text>
      </g>
   </svg>
);

const cubeFace = '#8393a8';

const ViewBar = () => (
   <div className="absolute top-0 right-0 flex w-[33px] flex-col items-center rounded-b-sm border border-[#b4b6ba] bg-[#95989d] pt-2 pr-0.5 pb-3">
      <button aria-label="动态观察">
         <svg viewBox="0 0 24 24" className="size-6" fill="none" stroke="#333c49"><circle cx="12" cy="12.500" r="9" fill="#a9bad0" /><path d="M1 17c-1 5 18-5 19-10" strokeWidth="1.500" /><path d="M5 8c2-4 7-5 10-3" stroke="#dfe8f2" strokeWidth="2" /><circle cx="19.500" cy="6" r="3.500" fill="#d6e1ee" /><circle cx="2.500" cy="17.500" r="1.500" fill="#333c49" /></svg>
      </button>
      <button aria-label="三维" className="mt-1.5">
         <svg viewBox="0 0 24 24" className="size-6" fill={cubeFace} stroke="#333c49"><path d="M.5 5.5L6 .5h17.500v17l-5 6H.5zM.5 5.5h18v18M18.500 5.500l5-5" /><text x="6" y="20" fontSize="8" fontFamily="Noto Sans" fill="#222a35" stroke="none">3D</text></svg>
      </button>
      <button aria-label="俯视" className="mt-[5px]">
         <svg viewBox="0 0 24 24" className="size-6" stroke="#333c49"><path d="M.5 5.5L6 .5h17.500v17l-5 6H.5z" fill="#cfe6fb" /><path d="M.5 5.5h18v18M18.500 5.500l5-5M6 .5v17h17.500M6 17.500l-5.500 6" fill="none" /></svg>
      </button>
      <button aria-label="视图方向" className="flex h-[15px] items-center"><Caret className="text-[#333]" /></button>
      <button aria-label="线框实体">
         <svg viewBox="0 0 24 24" className="size-6" fill={cubeFace} stroke="#333c49"><path d="M.5 5.5L6 .5h17.500v17l-5 6H.5zM.5 5.5h18v18M18.500 5.500l5-5" /></svg>
      </button>
      <button aria-label="显示方式" className="flex h-[15px] items-center"><Caret className="text-[#333]" /></button>
      <button aria-label="旋转视图">
         <svg viewBox="0 0 24 24" className="size-6" fill="none" stroke="#333c49" strokeWidth="2"><path d="M20 17.500A10 10 0 1 1 20 6" /><path d="M22 1v7h-7z" fill="#333c49" stroke="none" /></svg>
      </button>
      <button aria-label="旋转选项" className="flex h-[15px] items-center"><Caret className="text-[#333]" /></button>
      <div className="mb-1 w-6 border-t border-[#5b5e63]" />
      <button aria-label="显示设置">
         <svg viewBox="0 0 24 24" className="size-6" fill={cubeFace} stroke="#333c49"><path d="M.5 .5h23v23H.5zM.5 3.5h23" /><path d="M4 6.500l1.500 1.500L8 5.500M14 6.500l1.500 1.500L18 5.500M3.5 11.5h3v3h-3zM3.5 17.5h3v3h-3zM14.5 11.5h3v3h-3zM14.5 17.5h3v3h-3zM8 13.5h2M8 19.5h2M19 13.5h2M19 19.5h2M11.5 9v12" fill="none" /></svg>
      </button>
   </div>
);

const Splitter: React.FC<{ flip?: boolean }> = ({ flip }) => (
   <div className="flex w-1 shrink-0 flex-col justify-center bg-white">
      <div className="flex h-[100px] items-center bg-[#5c6670]">
         <svg viewBox="0 0 4 6" className={`h-1.5 w-1 ${flip ? 'rotate-180' : ''}`}><path d="M4 0v6L0 3z" fill="#d9dde2" /></svg>
      </div>
   </div>
);

/* ---------- display settings ---------- */

type LayerRow = [level: 0 | 1 | 2, name: string, shown: State];

const layers: LayerRow[] = [
   [0, '所有构件', 'mixed'],
   [1, '轴线', 'on'], [2, '轴网', 'on'], [2, '辅助轴线', 'on'],
   [1, '柱', 'on'], [2, '柱', 'on'], [2, '构造柱', 'on'], [2, '砌体柱', 'on'],
   [1, '墙', 'mixed'], [2, '剪力墙', 'on'], [2, '人防门框墙', 'on'], [2, '砌体墙', 'on'], [2, '砌体加筋', 'off'],
   [2, '保温墙', 'on'], [2, '暗梁', 'off'], [2, '墙垛', 'on'], [2, '幕墙', 'on'],
   [1, '门窗洞', 'mixed'], [2, '门', 'on'], [2, '窗', 'on'], [2, '门联窗', 'on'], [2, '墙洞', 'on'], [2, '带形窗', 'on'],
   [2, '带形洞', 'on'], [2, '飘窗', 'on'], [2, '老虎窗', 'off'], [2, '过梁', 'off'], [2, '壁龛', 'off'],
   [1, '梁', 'mixed'], [2, '梁', 'off'], [2, '连梁', 'on'], [2, '圈梁', 'off'],
   [1, '板', 'mixed'], [2, '现浇板', 'off'], [2, '', 'off'],
];

const Guide: React.FC<{ level: 0 | 1 | 2; last: boolean }> = ({ level, last }) => {
   if (level === 2) {
      return <svg viewBox="0 0 41 20" fill="none" stroke="#dcdcdc" className="h-5 w-[41px] shrink-0"><path d={`M8.5 0v20M18.5 0v${last ? 10 : 20}M18.5 9.5H35`} /></svg>;
   }
   return (
      <svg viewBox={level ? '0 0 31 20' : '0 0 21 20'} fill="none" stroke="#dcdcdc" className={`h-5 shrink-0 ${level ? 'w-[31px]' : 'w-[21px]'}`}>
         {level === 1 && <path d="M8.5 0v20M8.5 9.5h4M18.5 15v5" />}
         <rect x={level ? 12.5 : 2.5} y="3.500" width="12" height="12" rx="1.500" fill="#fff" stroke="#8a8a8a" />
         <path d={level ? 'M16 9.5h5' : 'M6 9.5h5'} stroke="#333" />
      </svg>
   );
};

const DisplayPanel = () => (
   <aside className="flex w-[280px] shrink-0 flex-col overflow-hidden border border-[#b9babd] bg-white">
      <Strip label="关闭显示设置" />
      <h2 className="flex h-[22px] shrink-0 items-center border-b border-[#c3c4c8] bg-[#efefef] pl-2 text-[#808080]">显示设置</h2>
      <div className="flex h-7 shrink-0 items-end gap-1 border-b border-[#c3c4c8] bg-[#efefef] px-0.5">
         <button className="-mb-px h-[25px] rounded-t-sm border border-b-0 border-[#c3c4c8] bg-white px-[13px] text-[#2f88ee]">图元显示</button>
         <button className="h-[22px] rounded-t-sm bg-[#dedede] px-[13px] text-[#555]">楼层显示</button>
      </div>
      <div className="mx-0.5 mt-[3px] flex min-h-0 flex-1 overflow-hidden border border-[#c3c4c8]">
         <div className="flex-1">
            <table className="w-full table-fixed border-separate border-spacing-0">
               <thead>
                  <tr className="bg-[#efefef] text-[#444]">
                     <th className={`${cell} font-normal`}>图层构件</th>
                     <th className={`${cell} w-[63px] bg-[#7fbbfb] font-bold text-white`}>显示图元</th>
                     <th className={`${cell} w-[63px] font-normal`}>显示名称</th>
                  </tr>
               </thead>
               <tbody>
                  {layers.map(([level, name, shown], index) => (
                     <tr key={index}>
                        <td className={cell}>
                           <div className="flex h-5 items-center">
                              <Guide level={level} last={layers[index + 1]?.[0] === 1} />
                              {name}
                           </div>
                        </td>
                        <td className={`${cell} ${name === '砌体墙' ? 'outline-2 -outline-offset-1 outline-[#7d7d7d]' : ''}`}>
                           <div className="flex justify-center"><Box label={`显示图元 ${name}`} state={shown} /></div>
                        </td>
                        <td className={cell}>
                           <div className="flex justify-center"><Box label={`显示名称 ${name}`} state={index > 0 && index < 4 ? 'disabled' : 'off'} /></div>
                        </td>
                     </tr>
                  ))}
               </tbody>
            </table>
         </div>
         <div className="w-3.5 px-[3px] pt-3.5">
            <div className="h-[28%] rounded-full bg-[#cbcbcb]" />
         </div>
      </div>
      <div className="flex h-[38px] shrink-0 items-center justify-end pr-2">
         <button className="h-[26px] rounded-sm border border-[#c3c4c8] bg-white px-2">恢复默认设置</button>
      </div>
   </aside>
);

// Red review marks drawn over the whole workspace
const Markup = () => (
   <svg viewBox="0 0 1920 844" preserveAspectRatio="xMinYMin meet" className="pointer-events-none absolute inset-0 size-full overflow-visible" fill="none">
      <rect x="214.500" y="426.500" width="278" height="418" rx="2" stroke="#ff1f12" strokeWidth="3" />
      <rect x="850.500" y="528.500" width="331" height="135" rx="2" stroke="#ff1f12" strokeWidth="2.500" />
      <path d="M380 518l17-4-2 4 268 102.500-1.500 1-271-93.500-1 7z" fill="#ff1f12" />
      <path d="M1170 604l17-5-2 4.500 391 117.500v1L1184 612l-2 6z" fill="#ff1f12" />
   </svg>
);

/* ---------- status bar ---------- */

const statusBtn = 'flex h-[25px] items-center justify-center gap-1.5 border border-[#9b9b9d] bg-[#d0d0d2]';

const StatusBar = () => (
   <footer className="flex h-[30px] shrink-0 items-center border-b border-white bg-[#dddde0] pt-px text-[#333]">
      <span className="w-[265px] pl-0.5">X = 444142 Y = 902624</span>
      <span className="w-[83px]">层高： 3.65</span>
      <span className="w-[133px]">标高： -7.35~-3.7</span>
      <span className="w-[103px]">0</span>
      <span className="w-[103px]">隐藏：0</span>
      <div className="flex gap-[3px]">
         <button aria-label="正交" className={`${statusBtn} w-[25px]`}>
            <svg viewBox="0 0 14 14" fill="none" stroke="#333" className="size-3.5"><path d="M1.5 1v11.5H14M1.5 8.5h4v4" /></svg>
         </button>
         <button aria-label="对象捕捉" className="flex h-[25px] w-9 items-center justify-center gap-1.5 border border-[#2f8ce8] bg-white">
            <svg viewBox="0 0 16 16" fill="none" className="size-4"><path d="M2.5 2.5h12v12h-12z" stroke={B} /><path d="M.5 .5h4v4h-4z" fill="#f7c29c" stroke="#e8833a" /></svg>
            <Caret />
         </button>
         <button aria-label="交点" className={`${statusBtn} mx-[3px] w-[25px]`}>
            <svg viewBox="0 0 16 16" fill="none" stroke="#333" className="size-4"><path d="M1 1l14 14M15 1L1 15M8 6l2 2-2 2-2-2z" /></svg>
         </button>
         <button aria-label="角度" className={`${statusBtn} w-9`}>
            <svg viewBox="0 0 16 16" fill="none" stroke="#333" className="size-4"><path d="M12 2L1 13.500h15" /><circle cx="7" cy="7.500" r="1.500" fill="#333" /></svg>
            <Caret />
         </button>
         <button aria-label="动态输入" className={`${statusBtn} w-9`}>
            <svg viewBox="0 0 16 16" fill="none" stroke="#333" className="size-4"><path d="M3.5 1v7M0 4.5h7" /><path d="M6.5 10.5h9v3h-9z" fill="#333" /></svg>
            <Caret />
         </button>
         <button className={`${statusBtn} w-[73px]`}>跨图层选择</button>
         <button className={`${statusBtn} w-[61px]`}>折线选择</button>
      </div>
      <span className="ml-1.5">指定下一点</span>
      <span className="ml-auto pr-9">500 FPS</span>
   </footer>
);

/* ---------- taskbar ---------- */

const Taskbar = () => (
   <div className="flex h-10 shrink-0 items-stretch bg-[#1e1e1e] text-white">
      <button aria-label="开始菜单" className="flex w-12 items-center justify-center">
         <svg viewBox="0 0 16 16" className="size-4"><path d="M0 2.200l6.500-1v6.300H0zM7.500 1L16 0v7.500H7.500zM0 8.500h6.500v6.300L0 14zM7.500 8.500H16V16l-8.500-1.200z" fill="#fff" /></svg>
      </button>
      <label className="flex w-[344px] items-center gap-[11px] border border-[#bdbdbd] bg-[#f1f1f1] pl-2.5 text-black">
         <Search className="size-[18px] -scale-x-100" strokeWidth={1.5} />
         <input aria-label="搜索" placeholder="在这里输入你要搜索的内容" className="min-w-0 flex-1 text-sm outline-none placeholder:text-[#333]" />
      </label>
      <button aria-label="Cortana" className="flex w-12 items-center justify-center">
         <span className="size-4 rounded-full border-2 border-white" />
      </button>
      <button aria-label="任务视图" className="flex w-12 items-center justify-center">
         <svg viewBox="0 0 16 16" fill="none" stroke="#fff" className="size-4"><path d="M.5 4.5h10v7H.5zM.5 0v2.500h10V0M.5 16v-2.500h10V16M14.500 0v3M14.500 8v8" /><path d="M13 4h3v3h-3z" fill="#fff" /></svg>
      </button>
      <button aria-label="Chrome" className="ml-[7px] flex w-10 items-center justify-center border-b-2 border-[#76b9ed]">
         <svg viewBox="0 0 24 24" className="size-[22px]">
            <circle cx="12" cy="12" r="12" fill="#fbc116" />
            <path d="M12 12L1.600 6A12 12 0 0 1 22.400 6z" fill="#db4437" />
            <path d="M12 12L1.600 6A12 12 0 0 0 12 24l5-9z" fill="#0f9d58" />
            <path d="M12 6.500h10.700A12 12 0 0 1 12 24l4.800-9z" fill="#fbc116" />
            <circle cx="12" cy="12" r="5.500" fill="#fff" />
            <circle cx="12" cy="12" r="4.300" fill="#4285f4" />
         </svg>
      </button>
      <button aria-label="微信" className="ml-[9px] flex w-10 items-center justify-center border-b-2 border-[#76b9ed]">
         <svg viewBox="0 0 26 24" className="h-6 w-[26px]">
            <path d="M10 1c6 0 9.500 3.500 9.500 8s-4 8-9.500 8H7l-3.500 2 .5-3.500C1.500 14 .5 11.500 .5 9 .5 4.500 4 1 10 1z" fill="#1fc95c" />
            <path d="M18 10c4.500 0 7.500 2.500 7.500 6 0 2-1 3.500-2.500 4.500l.5 2.500-3-1.300c-6 1-9.500-2-9.500-5.700s3-6 7-6z" fill="#e6e6e6" />
            <path d="M6.500 6.500H8M12 6.500h1.500M15 14.500h1.200M20 14.500h1.200" stroke="#23502f" strokeWidth="1.500" />
         </svg>
      </button>
      <button aria-label="GTJ2018" className="ml-[5px] flex w-12 items-center justify-center border-b-2 border-[#76b9ed] bg-[#4c4c4c]">
         <TLogo className="size-[26px]" />
      </button>
      <div className="ml-auto flex items-center">
         <ChevronUp className="mr-2 size-4" strokeWidth={1.5} />
         <svg viewBox="0 0 16 14" fill="none" stroke="#fff" className="mr-2 h-3.5 w-4"><path d="M4 1.5h11.500v8H3.5V5M7 12.5h6M9.5 9.5v3M.5 .5h3v4h-3z" /></svg>
         <Volume2 className="mr-2 size-4" strokeWidth={1.5} />
         <span className="mr-4">中</span>
         <svg viewBox="0 0 16 16" fill="none" className="mr-3.5 size-4"><rect x="1" y="1" width="14" height="14" rx="2" transform="rotate(-8 8 8)" fill="#f04a14" /><path d="M11.500 4.500C8 3 4.500 4 5 6s6.500 1.500 6.500 4-4 3-7.500 1.500" stroke="#fff" strokeWidth="2" /></svg>
         <div className="mr-4 text-center leading-[19px]">
            <p>9:32</p>
            <p>2020/11/24</p>
         </div>
         <button aria-label="通知中心" className="mr-5"><MessageSquare className="size-[18px]" strokeWidth={1.5} /></button>
         <span className="mr-1 h-10 border-l border-[#5a5a5a]" />
      </div>
   </div>
);

const App = () => (
   <div className="flex h-screen min-w-[1500px] flex-col overflow-hidden bg-white font-['Noto_Sans','Noto_Sans_CJK_SC',sans-serif] text-xs text-black">
      <Header />
      <Ribbon />
      <OptionBar />
      <main className="relative flex min-h-0 flex-1">
         <NavPanel />
         <div className="ml-1 flex w-[280px] shrink-0 flex-col gap-1.5">
            <MemberPanel />
            <PropertyPanel />
         </div>
         <Splitter />
         <div className="relative min-w-0 flex-1 overflow-hidden bg-black">
            <Drawing />
            <ViewBar />
         </div>
         <Splitter flip />
         <DisplayPanel />
         <Markup />
      </main>
      <StatusBar />
      <Taskbar />
   </div>
);

export default App;
